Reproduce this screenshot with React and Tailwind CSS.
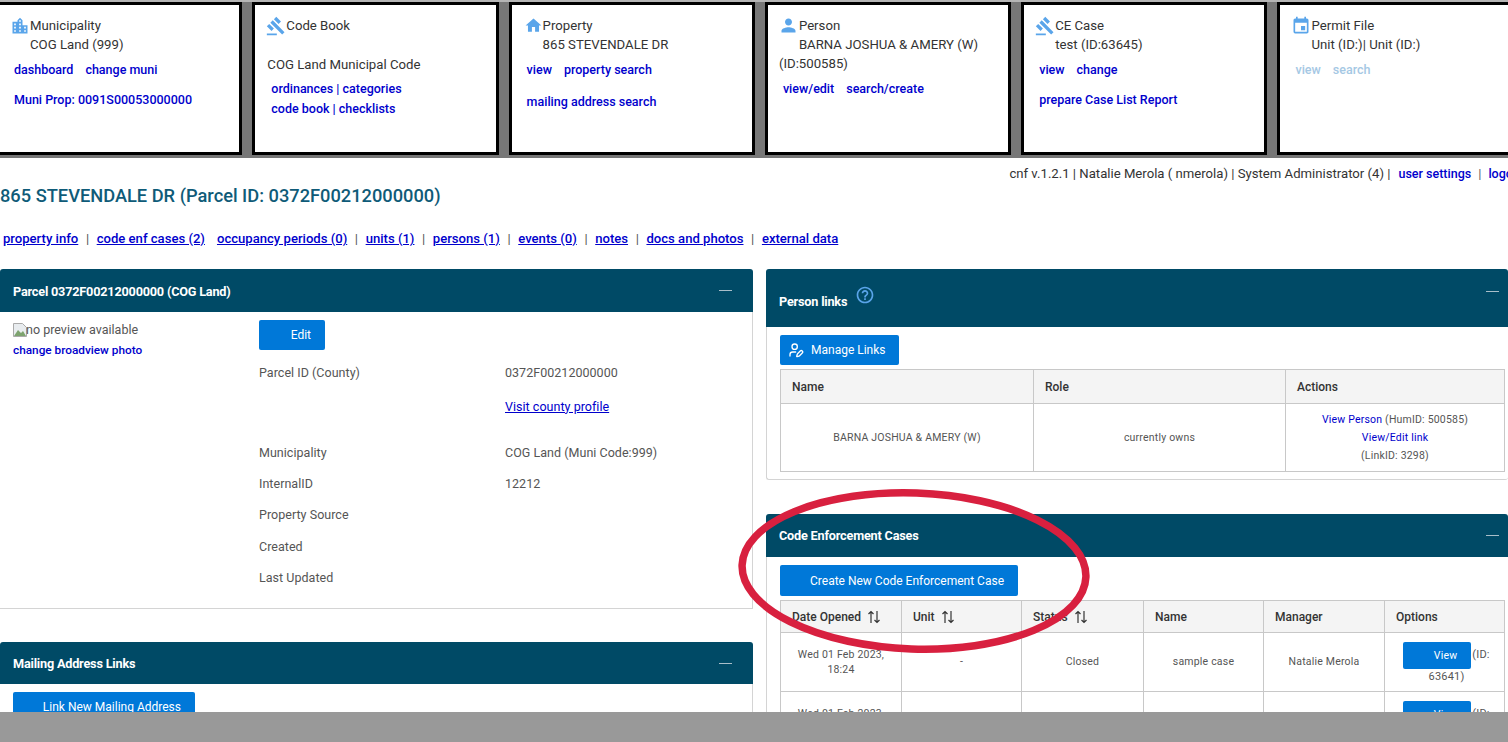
import React from "react";
import { MdLocationCity, MdGavel, MdHome, MdPerson, MdEvent, MdHelpOutline } from "react-icons/md";
import { UserPen } from "lucide-react";

const L = ({ children, className = "" }) => (
  <a className={`text-[12.5px] font-medium text-[#0000cc] ${className}`}>{children}</a>
);

function Card({ icon, title, className = "", pad = "pl-[14px]", iconW = "w-4", children }) {
  return (
    <div className={`h-[153px] w-[246.3px] shrink-0 border-[3px] border-black bg-white pt-[11px] pr-2 text-[13.2px] leading-[19px] text-[#333] ${pad} ${className}`}>
      <div className="flex h-[19px] items-center">
        <span className={`flex h-[19px] items-center justify-end text-[#5aa5ea] ${iconW}`}>
          <span className="shrink-0">{icon}</span>
        </span>
        <span>{title}</span>
      </div>
      {children}
    </div>
  );
}

function Sort() {
  return (
    <svg width="16" height="16" viewBox="0 0 16 16" fill="none" stroke="#333" strokeWidth="1.2" className="ml-[5px] inline-block">
      <path d="M5 14V2.5M2.5 5 5 2.5 7.5 5M11 2v11.5M8.5 11l2.5 2.5 2.5-2.5" />
    </svg>
  );
}

function Head({ title, h = "h-[43px]", extra, pr = "pr-[21px]", dash = "" }) {
  return (
    <div className={`flex items-center justify-between rounded-t-[3px] bg-[#004a66] pl-[13px] ${h} ${pr}`}>
      <div className="flex items-center text-[12.7px] font-bold tracking-[-0.2px] text-white">
        {title}
        {extra}
      </div>
      <div className={`h-[1px] w-[13px] bg-[#a9bec9] ${dash}`} />
    </div>
  );
}

function Row({ a, b, className = "" }) {
  return (
    <div className={`grid h-[31.3px] grid-cols-[246px_1fr] items-center text-[12.5px] tracking-[0.03px] text-[#555] ${className}`}>
      <div>{a}</div>
      <div>{b}</div>
    </div>
  );
}

const Th = ({ children }) => (
  <th className="border border-[#c8c8c8] bg-[#f4f4f4] px-[11px] text-left text-[12px] font-medium text-[#333]">{children}</th>
);
const Td = ({ children, leading = "leading-[18px]" }) => (
  <td className={`border border-[#c8c8c8] px-[11px] text-center text-[10.5px] tracking-[0.2px] text-[#555] ${leading}`}>{children}</td>
);

function ViewCell({ id }) {
  return (
    <td className="border border-[#c8c8c8] pl-[14px] pr-[10px] text-center align-top text-[11px] leading-[16px] tracking-[0.2px] text-[#555]">
      <div className="pt-[9px]">
        <a className="mr-[1px] inline-flex h-[27px] w-[68px] items-center justify-end rounded-[2px] bg-[#0078d8] pr-[14px] align-middle text-[10.5px] text-white">View</a>
        (ID: {id})
      </div>
    </td>
  );
}

export default function App() {
  return (
    <div className="relative h-[742px] w-[1508px] overflow-hidden bg-white font-['Roboto',sans-serif]">
      {/* top context bar */}
      <div className="flex h-[158px] gap-[10px] overflow-hidden border-t-2 border-[#b5b5b5] bg-[#777777]">
        <Card className="ml-[-4px]" pad="pl-[15px]" icon={<MdLocationCity size={20} />} title="Municipality">
          <div className="pl-[16px]">COG Land (999)</div>
          <div className="mt-[8px] leading-[16px]"><L>dashboard</L><L className="ml-[12px]">change muni</L></div>
          <div className="mt-[14px] leading-[16px]"><L>Muni Prop: 0091S00053000000</L></div>
        </Card>
        <Card pad="pl-[12px]" iconW="w-[19px]" icon={<MdGavel size={20} />} title="Code Book">
          <div className="mt-[20px]">COG Land Municipal Code</div>
          <div className="mt-[5px] pl-[4px] leading-[20px]"><L>ordinances | categories</L></div>
          <div className="pl-[4px] leading-[20px]"><L>code book | checklists</L></div>
        </Card>
        <Card pad="pl-[15px]" icon={<MdHome size={19} />} title="Property">
          <div className="pl-[16px]">865 STEVENDALE DR</div>
          <div className="mt-[8px] leading-[16px]"><L>view</L><L className="ml-[12px]">property search</L></div>
          <div className="mt-[16px] leading-[16px]"><L>mailing address search</L></div>
        </Card>
        <Card pad="pl-[11px]" iconW="w-[20px]" icon={<MdPerson size={21} />} title="Person">
          <div className="pl-[20px]">BARNA JOSHUA &amp; AMERY (W)</div>
          <div>(ID:500585)</div>
          <div className="mt-[8px] pl-[4px] leading-[16px]"><L>view/edit</L><L className="ml-[12px]">search/create</L></div>
        </Card>
        <Card pad="pl-[15px]" icon={<MdGavel size={20} />} title="CE Case">
          <div className="pl-[16px]">test (ID:63645)</div>
          <div className="mt-[8px] leading-[16px]"><L>view</L><L className="ml-[12px]">change</L></div>
          <div className="mt-[14px] leading-[16px]"><L>prepare Case List Report</L></div>
        </Card>
        <Card pad="pl-[15px]" icon={<MdEvent size={20} />} title="Permit File">
          <div className="pl-[16px]">Unit (ID:)| Unit (ID:)</div>
          <div className="mt-[8px] text-[12.5px] font-medium leading-[16px] text-[#a5c8e4]"><span>view</span><span className="ml-[12px]">search</span></div>
        </Card>
      </div>

      {/* user line */}
      <div className="mt-[8px] flex h-4 justify-end whitespace-nowrap text-[13.15px] leading-4 text-[#333]">
        <div className="mr-[-16px] flex">
          <span>cnf v.1.2.1 | Natalie Merola ( nmerola) | System Administrator (4) |</span>
          <L className="ml-[8px]">user settings</L>
          <span className="mx-[7px] text-[#666]">|</span>
          <L>logout</L>
        </div>
      </div>

      <h1 className="mt-[2px] whitespace-nowrap text-[18.25px] font-medium leading-6 text-[#0f5b78]">865 STEVENDALE DR (Parcel ID: 0372F00212000000)</h1>

      <nav className="mt-[23px] flex items-center pl-[3px] text-[13.1px] font-medium leading-4 text-[#0000cc] [&_a]:underline [&_span]:mx-[7.6px] [&_span]:font-normal [&_span]:text-[#555]">
        <a>property info</a><span>|</span>
        <a>code enf cases (2)</a>
        <a className="ml-[12px]">occupancy periods (0)</a><span>|</span>
        <a>units (1)</a><span>|</span>
        <a>persons (1)</a><span>|</span>
        <a>events (0)</a><span>|</span>
        <a>notes</a><span>|</span>
        <a>docs and photos</a><span>|</span>
        <a>external data</a>
      </nav>

      {/* two columns */}
      <div className="mt-[22px] flex items-start gap-[13px]">
        <div className="w-[753px] shrink-0">
          <section>
            <Head title={<span className="pt-[2px]">Parcel 0372F00212000000 (COG Land)</span>} />
            <div className="grid h-[297px] grid-cols-[259px_1fr] border-b border-r border-[#d4d4d4]">
              <div className="pl-[13px] pt-2 text-[12.5px] leading-[20px] text-[#555]">
                <div className="flex items-center">
                  <svg width="14" height="14" viewBox="0 0 14 14" className="shrink-0">
                    <path d="M0.5 0.5h9l4 4v9h-13z" fill="#e8ecef" stroke="#aaa" />
                    <path d="M1 13l4-6 3 3 2-2 3 5z" fill="#7da36f" />
                  </svg>
                  <span className="-ml-[1px]">no preview available</span>
                </div>
                <div className="text-[11.8px] font-medium text-[#0000cc]">change broadview photo</div>
              </div>
              <div className="pt-2">
                <a className="flex h-[30px] w-[66px] items-center justify-end rounded-[2px] bg-[#0078d8] pr-[14px] text-[12px] text-white">Edit</a>
                <div className="mt-[8px]">
                  <Row a="Parcel ID (County)" b="0372F00212000000" />
                  <Row a="" b={<a className="text-[#0000cc] underline">Visit county profile</a>} className="mt-[2px]" />
                  <Row a="Municipality" b="COG Land (Muni Code:999)" className="mt-[15px]" />
                  <Row a="InternalID" b="12212" />
                  <Row a="Property Source" b="" />
                  <Row a="Created" b="" />
                  <Row a="Last Updated" b="" />
                </div>
              </div>
            </div>
          </section>

          <section className="mt-[33px]">
            <Head title={<span className="pt-[2px]">Mailing Address Links</span>} h="h-[42px]" />
            <div className="border-r border-[#d4d4d4] pl-[13px] pt-2">
              <a className="flex h-[30px] w-[182px] items-center justify-end rounded-[2px] bg-[#0078d8] pr-[14px] text-[12px] text-white">Link New Mailing Address</a>
            </div>
          </section>
        </div>

        <div className="w-[742px] shrink-0">
          <section>
            <Head
              title={<span className="pt-2">Person links</span>}
              h="h-[58px]"
              pr="pr-[9px]"
              dash="-mt-[14px]"
              extra={<MdHelpOutline size={20} className="ml-[8px] -mt-[6px] text-[#5aa5ea]" />}
            />
            <div className="rounded-b-[3px] border-b border-l border-[#d4d4d4] pb-[7px] pl-[13px] pt-2">
              <a className="flex h-[30px] w-[119px] items-center justify-start gap-[7px] rounded-[2px] bg-[#0078d8] pl-[8px] text-[12px] text-white">
                <UserPen size={16} strokeWidth={2} />
                Manage Links
              </a>
              <table className="mt-[4px] w-[725px] table-fixed border-collapse">
                <colgroup><col className="w-[253px]" /><col className="w-[252px]" /><col /></colgroup>
                <thead><tr className="h-[34px]"><Th>Name</Th><Th>Role</Th><Th>Actions</Th></tr></thead>
                <tbody>
                  <tr className="h-[68px]">
                    <Td>BARNA JOSHUA &amp; AMERY (W)</Td>
                    <Td>currently owns</Td>
                    <Td>
                      <a className="text-[#0000cc]">View Person</a> (HumID: 500585)<br />
                      <a className="text-[#0000cc]">View/Edit link</a><br />
                      (LinkID: 3298)
                    </Td>
                  </tr>
                </tbody>
              </table>
            </div>
          </section>

          <section className="mt-[34px]">
            <Head title="Code Enforcement Cases" pr="pr-[9px]" />
            <div className="border-l border-[#d4d4d4] pl-[13px] pt-2">
              <a className="flex h-[31px] w-[238px] items-center justify-end rounded-[2px] bg-[#0078d8] pr-[14px] text-[12px] text-white">Create New Code Enforcement Case</a>
              <table className="mt-[4px] w-[725px] table-fixed border-collapse">
                <colgroup><col className="w-[121px]" /><col className="w-[120px]" /><col className="w-[122px]" /><col className="w-[120px]" /><col className="w-[121px]" /><col /></colgroup>
                <thead>
                  <tr className="h-[32px]">
                    <Th><span className="flex items-center whitespace-nowrap">Date Opened<Sort /></span></Th>
                    <Th><span className="flex items-center">Unit<Sort /></span></Th>
                    <Th><span className="flex items-center">Status<Sort /></span></Th>
                    <Th>Name</Th>
                    <Th>Manager</Th>
                    <Th>Options</Th>
                  </tr>
                </thead>
                <tbody>
                  <tr className="h-[59px]">
                    <Td leading="leading-[15px]">Wed 01 Feb 2023,<br />18:24</Td>
                    <Td>-</Td>
                    <Td>Closed</Td>
                    <Td>sample case</Td>
                    <Td>Natalie Merola</Td>
                    <ViewCell id="63641" />
                  </tr>
                  <tr className="h-[59px]">
                    <Td leading="leading-[15px]">Wed 01 Feb 2023,<br />18:24</Td>
                    <Td>-</Td>
                    <Td>Open</Td>
                    <Td>test</Td>
                    <Td>Natalie Merola</Td>
                    <ViewCell id="63645" />
                  </tr>
                </tbody>
              </table>
            </div>
          </section>
        </div>
      </div>

      {/* annotation ellipse drawn on top of the screenshot */}
      <svg width="360" height="174" viewBox="0 0 360 174" fill="none" className="absolute left-[735px] top-[484px]">
        <ellipse cx="179" cy="87" rx="172" ry="78" transform="rotate(2 179 87)" stroke="#d8203f" strokeWidth="7.5" />
      </svg>

      {/* grey strip covering the bottom of the page */}
      <div className="absolute inset-x-0 bottom-0 h-[30px] bg-[#999999]" />
    </div>
  );
}
